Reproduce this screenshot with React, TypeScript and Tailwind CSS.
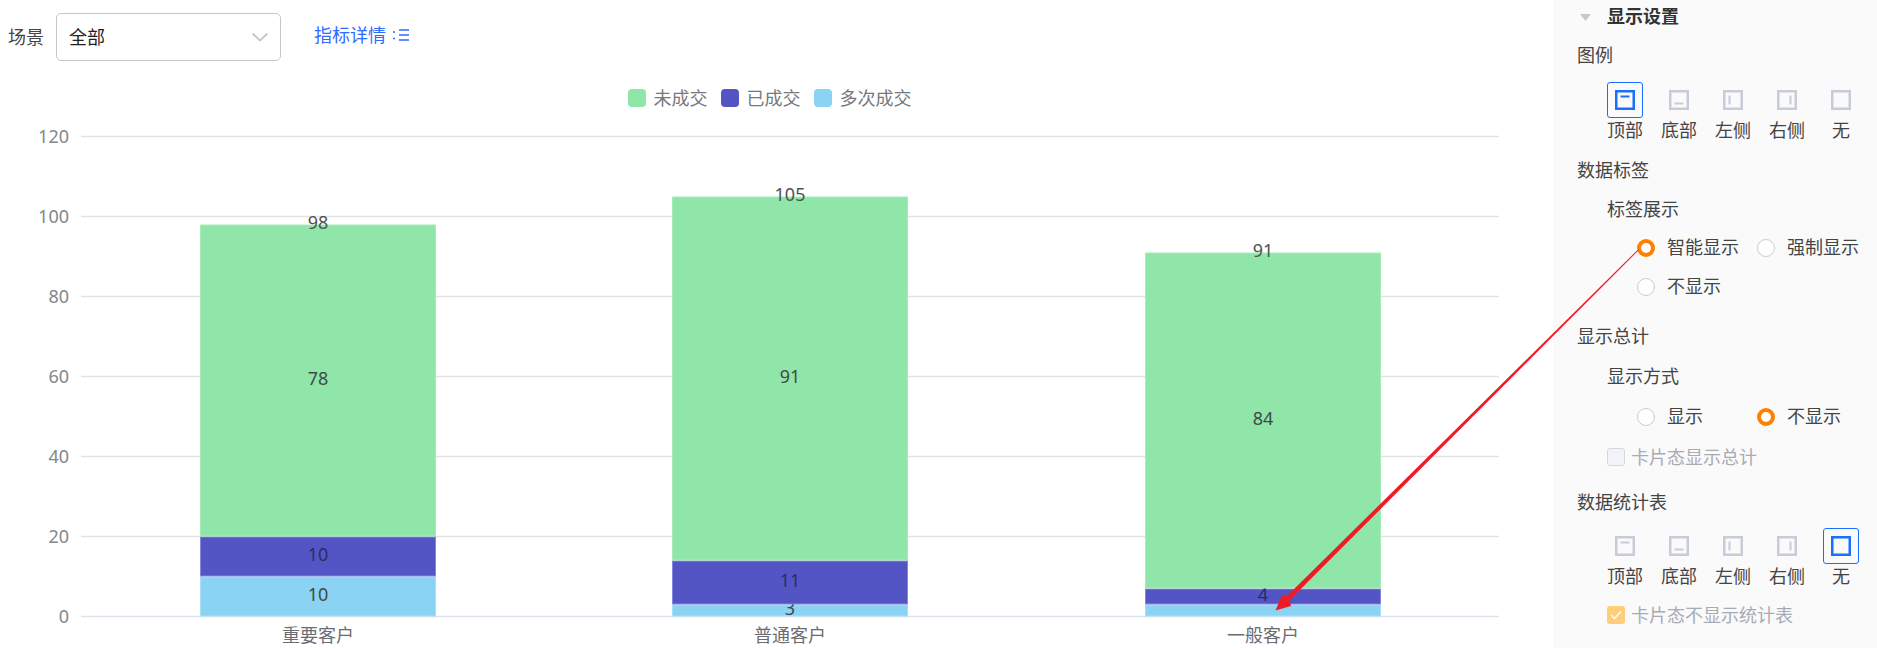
const categories = [
  { name: "重要客户", x: 200, values: [10, 10, 78], total: 98, hideFirst: false },
  { name: "普通客户", x: 672, values: [3, 11, 91], total: 105, hideFirst: false },
  { name: "一般客户", x: 1145, values: [3, 4, 84], total: 91, hideFirst: true },
];

const series = [
  { name: "未成交", fill: "#8fe6a8", stroke: "#a5ecb9", swatch: "bg-[#8fe6a8]" },
  { name: "已成交", fill: "#5355c4", stroke: "#8586dc", swatch: "bg-[#5355c4]" },
  { name: "多次成交", fill: "#8bd3f2", stroke: "#a8e0f7", swatch: "bg-[#8bd3f2]" },
];

// stack order from the axis upward
const stackOrder = [series[2], series[1], series[0]];

const baseY = 616.5;
const unit = 4;
const ticks = [0, 20, 40, 60, 80, 100, 120];

const Chart = () => (
  <svg className="block w-[1553px] h-[528px]" viewBox="0 120 1553 528">
    {ticks.map(t => {
      const y = baseY - t * unit;
      return (
        <g key={t}>
          <line x1="81" x2="1499" y1={y} y2={y} stroke={t === 0 ? "#dfe3ee" : "#e3e3e6"} strokeWidth="1.6" />
          <text x="69" y={y - 1} textAnchor="end" dominantBaseline="central" fontSize="18" fill="#85868c">
            {t}
          </text>
        </g>
      );
    })}
    {categories.map(cat => {
      let acc = 0;
      return (
        <g key={cat.name}>
          {cat.values.map((v, i) => {
            const top = baseY - (acc + v) * unit;
            const s = stackOrder[i];
            const labelY = top + (v * unit) / 2 - 3;
            acc += v;
            return (
              <g key={s.name}>
                <rect x={cat.x + 0.5} y={top + 0.5} width="235" height={v * unit - 1} fill={s.fill} stroke={s.stroke} />
                {!(cat.hideFirst && i === 0) && (
                  <text
                    x={cat.x + 118}
                    y={labelY}
                    textAnchor="middle"
                    dominantBaseline="central"
                    fontSize="18"
                    fill={i === 1 ? "#2b2c66" : "#3f4a48"}
                  >
                    {v}
                  </text>
                )}
              </g>
            );
          })}
          <text
            x={cat.x + 118}
            y={baseY - cat.total * unit - 3}
            textAnchor="middle"
            dominantBaseline="central"
            fontSize="18"
            fill="#4b5553"
          >
            {cat.total}
          </text>
          <text x={cat.x + 118} y="635" textAnchor="middle" dominantBaseline="central" fontSize="18" fill="#6b6c72">
            {cat.name}
          </text>
        </g>
      );
    })}
  </svg>
);

const PositionIcon = ({ type, active }: { type: string; active?: boolean }) => (
  <div
    className={`w-[36px] h-[36px] rounded-[3px] flex items-center justify-center border ${
      active ? "border-[#1a6fff]" : "border-transparent"
    }`}
  >
    <svg width="22" height="22" viewBox="0 0 22 22" fill="none" stroke={active ? "#1a6fff" : "#c8ccd8"}>
      <rect x="2.25" y="2.25" width="17.5" height="17.5" strokeWidth="2.5" />
      {type === "top" && <path d="M6.5 7.5h9" strokeWidth="2" />}
      {type === "bottom" && <path d="M6.5 14.5h9" strokeWidth="2" />}
      {type === "left" && <path d="M7.5 6.5v9" strokeWidth="2" />}
      {type === "right" && <path d="M14.5 6.5v9" strokeWidth="2" />}
    </svg>
  </div>
);

const positions = [
  { type: "top", label: "顶部" },
  { type: "bottom", label: "底部" },
  { type: "left", label: "左侧" },
  { type: "right", label: "右侧" },
  { type: "none", label: "无" },
];

const PositionRow = ({ active }: { active: string }) => (
  <div className="flex pl-[45px] mt-[10px]">
    {positions.map(p => (
      <div key={p.type} className="w-[54px] flex flex-col items-center">
        <PositionIcon type={p.type} active={p.type === active} />
        <span className="h-[26px] leading-[24px] text-[#444]">{p.label}</span>
      </div>
    ))}
  </div>
);

const Radio = ({ label, checked }: { label: string; checked?: boolean }) => (
  <div className="w-[120px] flex items-center gap-3 text-[#444]">
    <span
      className={`w-[18px] h-[18px] rounded-full bg-white ${
        checked ? "border-[4.5px] border-[#ff8000]" : "border border-[#c9ccd6]"
      }`}
    />
    <span className="mb-[2px]">{label}</span>
  </div>
);

const App = () => {
  return (
    <div className="relative flex w-[1877px] h-[648px] overflow-hidden bg-white text-[18px] font-['Noto_Sans','Noto_Sans_CJK_SC',sans-serif]">
      <div className="w-[1553px] shrink-0">
        <div className="flex items-center h-[76px] pl-[8px] pb-[2px]">
          <span className="text-[#444] w-[48px]">场景</span>
          <div className="flex items-center justify-between w-[225px] h-[48px] pl-[12px] pr-[11px] bg-white border border-[#c5c7d0] rounded-[5px] text-[#222]">
            <span>全部</span>
            <svg width="18" height="10" viewBox="0 0 18 10" fill="none" stroke="#c5c9d3" strokeWidth="2">
              <path d="M1.5 1.5 9 8.5l7.5-7" />
            </svg>
          </div>
          <div className="flex items-center gap-[7px] ml-[33px] mb-[4px] text-[#2f6bff]">
            <span>指标详情</span>
            <svg width="16" height="14" viewBox="0 0 16 14" fill="none" stroke="#2f6bff" strokeWidth="1.5">
              <path d="M0 4h2M0 10.5h2M6 2h10M6 7h10M6 12h10" />
            </svg>
          </div>
        </div>
        <div className="flex justify-center gap-[13px] h-[44px] items-center pr-[14px] text-[18px] text-[#77787e]">
          {series.map(s => (
            <div key={s.name} className="flex items-center gap-[8px]">
              <span className={`w-[18px] h-[18px] rounded-[4px] ${s.swatch}`} />
              <span>{s.name}</span>
            </div>
          ))}
        </div>
        <Chart />
      </div>

      <div className="w-[324px] bg-[#fafafb] text-[#444]">
        <div className="flex items-center h-[32px] pl-[27px] gap-[16px]">
          <svg width="11" height="7" viewBox="0 0 11 7" className="mt-[3px]">
            <path d="M0 0h11L5.5 7z" fill="#c5c8d2" />
          </svg>
          <span className="font-bold text-[#333]">显示设置</span>
        </div>
        <div className="h-[32px] leading-[30px] mt-[8px] pl-[24px]">图例</div>
        <PositionRow active="top" />
        <div className="h-[32px] leading-[30px] mt-[11px] pl-[24px]">数据标签</div>
        <div className="h-[32px] leading-[32px] mt-[6px] pl-[54px]">标签展示</div>
        <div className="flex items-center h-[32px] mt-[7px] pl-[84px]">
          <Radio label="智能显示" checked />
          <Radio label="强制显示" />
        </div>
        <div className="flex items-center h-[32px] mt-[7px] pl-[84px]">
          <Radio label="不显示" />
        </div>
        <div className="h-[32px] leading-[30px] mt-[18px] pl-[24px]">显示总计</div>
        <div className="h-[32px] leading-[30px] mt-[8px] pl-[54px]">显示方式</div>
        <div className="flex items-center h-[32px] mt-[8px] pl-[84px]">
          <Radio label="显示" />
          <Radio label="不显示" checked />
        </div>
        <div className="flex items-center gap-[6px] h-[32px] mt-[8px] pl-[54px] text-[#a8abb3]">
          <span className="w-[18px] h-[18px] rounded-[3px] bg-[#f2f3f7] border border-[#d5d8e0]" />
          <span>卡片态显示总计</span>
        </div>
        <div className="h-[32px] leading-[32px] mt-[13px] pl-[24px]">数据统计表</div>
        <PositionRow active="none" />
        <div className="flex items-center gap-[6px] h-[32px] mt-[9px] pl-[54px] text-[#a8abb3]">
          <span className="flex items-center justify-center w-[18px] h-[18px] rounded-[3px] bg-[#ffcc7a]">
            <svg width="12" height="10" viewBox="0 0 12 10" fill="none" stroke="#fff" strokeWidth="1.3">
              <path d="M1 5l3.5 3.5L11 1.5" />
            </svg>
          </span>
          <span>卡片态不显示统计表</span>
        </div>
      </div>

      {/* red annotation arrow on top of the screenshot */}
      <svg className="absolute inset-0 pointer-events-none" width="1877" height="648" viewBox="0 0 1877 648">
        <polygon
          points="1638.9,250 1638.1,249.4 1287,596 1282,595 1275.5,610.5 1291,606 1289.8,600"
          fill="#ee1c25"
        />
      </svg>
    </div>
  );
};

export default App;
